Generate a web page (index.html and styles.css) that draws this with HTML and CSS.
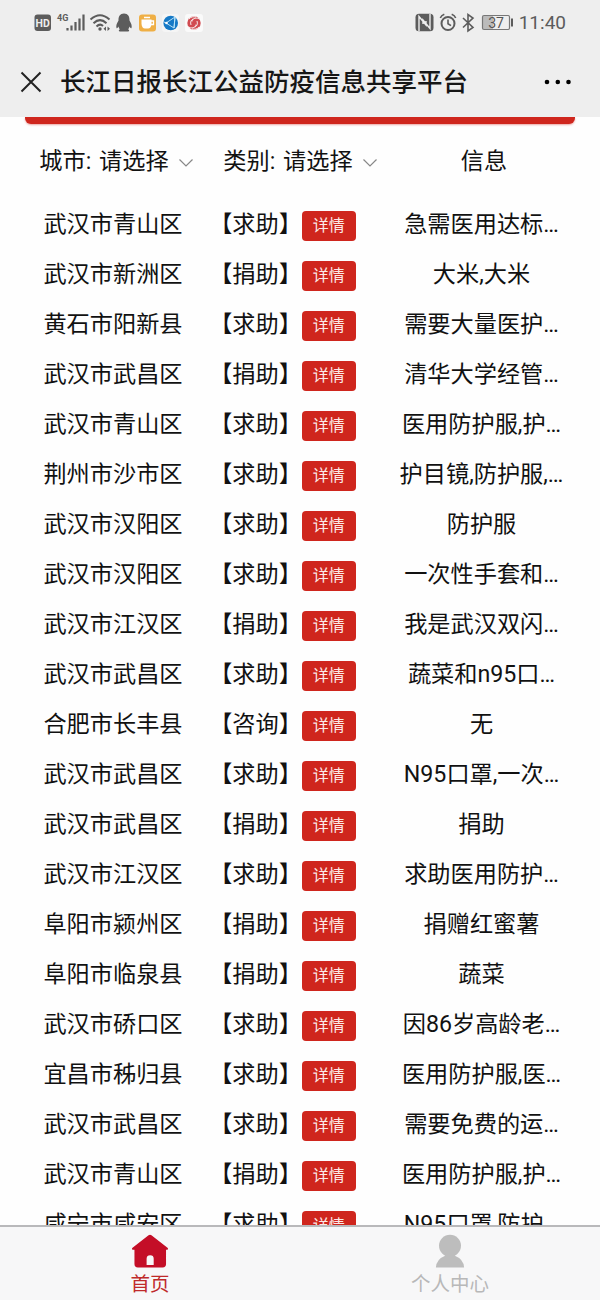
FILE: index.html
```html
<!DOCTYPE html>
<html lang="zh-CN">
<head>
    <meta charset="UTF-8">
    <meta name="viewport" content="width=device-width, initial-scale=1.0">
    <title>长江日报长江公益防疫信息共享平台</title>
    <link rel="stylesheet" href="styles.css">
</head>
<body>
    <!-- Phone status bar -->
    <div class="status-bar">
        <svg class="status-left" width="170" height="24" viewBox="34 11 170 24">
            <rect x="34.500" y="14.500" width="16.500" height="16.500" rx="3" fill="#5c5c5c"/>
            <text x="42.700" y="26.900" class="hd-text">HD</text>
            <text x="57" y="21.300" class="net-text">4G</text>
            <path d="M67.500 30.500v-2.500M71.500 30.500v-5M75.500 30.500v-8.500M79.500 30.500v-12M83.500 30.500v-16" stroke="#5c5c5c" stroke-width="2.200" fill="none"/>
            <path d="M90.500 19.500Q100 11 109.500 19.500M93.500 23.200Q100 17 106.500 23.200M96.500 26.500Q100 23 103 26" stroke="#5c5c5c" stroke-width="2" fill="none"/>
            <circle cx="100" cy="29" r="1.700" fill="#5c5c5c"/>
            <path d="M106 26.500v4.500l-2.500-2.200zM107.500 26.500v4.500l2.500-2.200z" fill="#5c5c5c"/>
            <path d="M124 13.500c-4 0-5.700 3-5.500 7-1.500 2.500-2.800 5-2 7.500.6.600 1.400-.5 2-1.500.2 1.300.6 2 1.500 2.800-1.500.5-1.700 2.200 0 2.200h8c1.700 0 1.500-1.700 0-2.200.9-.8 1.300-1.500 1.500-2.800.6 1 1.400 2.100 2 1.500.8-2.500-.5-5-2-7.500.2-4-1.500-7-5.500-7z" fill="#5c5c5c"/>
            <rect x="139" y="14.500" width="17" height="17" rx="3" fill="#efaf45"/>
            <path d="M141.500 19.500h10v4c0 3-1.500 5-3.500 5h-3c-2 0-3.500-2-3.500-5z" fill="#fff"/>
            <path d="M151 21h2.500v3.500H151M144 17.500h6" stroke="#fff" stroke-width="1.300" fill="none"/>
            <rect x="162" y="14" width="17" height="18" rx="3" fill="#f5f5f5"/>
            <circle cx="170.700" cy="23" r="7.300" fill="#1679c6"/>
            <path d="M175 17l-9 6 8 5zM175 17l-1 11M166 23l-2-1" stroke="#b9e2f7" stroke-width="1" fill="none"/>
            <circle cx="166.500" cy="23" r="1.300" fill="#fff"/>
            <rect x="185" y="14" width="18" height="18" rx="3" fill="#fafafa"/>
            <circle cx="194" cy="23" r="6.700" fill="#d14a50"/>
            <path d="M200.500 19.500c-4-2.500-8-1.500-8.500 2M187.500 26.500c4 2.500 8 1.500 8.500-2M189 19c2-2.500 5-2.500 7-2M199 27c-2 2.500-5 2.500-7 2M191 25c-1-3 0-5 2-6M197 21c1 3 0 5-2 6" stroke="#fafafa" stroke-width=".9" fill="none"/>
        </svg>
        <div class="status-right">
            <svg width="98" height="24" viewBox="415 11 98 24">
                <rect x="415.500" y="13.800" width="18" height="17.500" rx="3.500" fill="#5c5c5c"/>
                <path d="M419 31V16.500l7 8.500v-4M430 14v14.500l-7-8.500v4" stroke="#eee" stroke-width="1.400" fill="none"/>
                <circle cx="448" cy="23.500" r="6.500" stroke="#5c5c5c" stroke-width="2" fill="none"/>
                <path d="M448 19.500v4.200l3 2M440.300 18q1-2.500 4-3.700M455.700 18q-1-2.500-4-3.700" stroke="#5c5c5c" stroke-width="1.600" fill="none"/>
                <path d="M463 18l10 9.500-5 3.500V14.500l5 3.500-10 9.500" stroke="#5c5c5c" stroke-width="1.600" fill="none"/>
                <rect x="483" y="16" width="10" height="13" fill="#bbb"/>
                <rect x="482.500" y="15.500" width="27" height="14" rx="1.500" stroke="#777" stroke-width="1.200" fill="none"/>
                <path d="M512 18.500v8" stroke="#5c5c5c" stroke-width="2"/>
                <text x="496" y="27.500" class="battery-text">37</text>
            </svg>
            <span class="time">11:40</span>
        </div>
    </div>

    <!-- Title bar -->
    <div class="title-bar">
        <svg width="22" height="22" viewBox="0 0 22 22">
            <path d="M1.500 1.500l19 19M20.500 1.500l-19 19" stroke="#222" stroke-width="2"/>
        </svg>
        <h1>长江日报长江公益防疫信息共享平台</h1>
        <svg width="28" height="6" viewBox="0 0 28 6">
            <circle cx="3" cy="3" r="2.300"/>
            <circle cx="13.800" cy="3" r="2.300"/>
            <circle cx="24.500" cy="3" r="2.300"/>
        </svg>
    </div>

    <div class="content">
        <div class="banner"></div>

        <!-- Filters -->
        <div class="filters">
            <div>城市: 请选择<svg class="arrow" width="14" height="8" viewBox="0 0 14 8"><path d="M.5.500L7 7 13.500.500"/></svg></div>
            <div>类别: 请选择<svg class="arrow" width="14" height="8" viewBox="0 0 14 8"><path d="M.5.500L7 7 13.500.500"/></svg></div>
            <div>信息</div>
        </div>

        <div class="list">
            <div class="row"><span>武汉市青山区</span><span class="type">【求助】<button>详情</button></span><span>急需医用达标…</span></div>
            <div class="row"><span>武汉市新洲区</span><span class="type">【捐助】<button>详情</button></span><span>大米,大米</span></div>
            <div class="row"><span>黄石市阳新县</span><span class="type">【求助】<button>详情</button></span><span>需要大量医护…</span></div>
            <div class="row"><span>武汉市武昌区</span><span class="type">【捐助】<button>详情</button></span><span>清华大学经管…</span></div>
            <div class="row"><span>武汉市青山区</span><span class="type">【求助】<button>详情</button></span><span>医用防护服,护…</span></div>
            <div class="row"><span>荆州市沙市区</span><span class="type">【求助】<button>详情</button></span><span>护目镜,防护服,…</span></div>
            <div class="row"><span>武汉市汉阳区</span><span class="type">【求助】<button>详情</button></span><span>防护服</span></div>
            <div class="row"><span>武汉市汉阳区</span><span class="type">【求助】<button>详情</button></span><span>一次性手套和…</span></div>
            <div class="row"><span>武汉市江汉区</span><span class="type">【捐助】<button>详情</button></span><span>我是武汉双闪…</span></div>
            <div class="row"><span>武汉市武昌区</span><span class="type">【求助】<button>详情</button></span><span>蔬菜和n95口…</span></div>
            <div class="row"><span>合肥市长丰县</span><span class="type">【咨询】<button>详情</button></span><span>无</span></div>
            <div class="row"><span>武汉市武昌区</span><span class="type">【求助】<button>详情</button></span><span>N95口罩,一次…</span></div>
            <div class="row"><span>武汉市武昌区</span><span class="type">【捐助】<button>详情</button></span><span>捐助</span></div>
            <div class="row"><span>武汉市江汉区</span><span class="type">【求助】<button>详情</button></span><span>求助医用防护…</span></div>
            <div class="row"><span>阜阳市颍州区</span><span class="type">【捐助】<button>详情</button></span><span>捐赠红蜜薯</span></div>
            <div class="row"><span>阜阳市临泉县</span><span class="type">【捐助】<button>详情</button></span><span>蔬菜</span></div>
            <div class="row"><span>武汉市硚口区</span><span class="type">【求助】<button>详情</button></span><span>因86岁高龄老…</span></div>
            <div class="row"><span>宜昌市秭归县</span><span class="type">【求助】<button>详情</button></span><span>医用防护服,医…</span></div>
            <div class="row"><span>武汉市武昌区</span><span class="type">【求助】<button>详情</button></span><span>需要免费的运…</span></div>
            <div class="row"><span>武汉市青山区</span><span class="type">【捐助】<button>详情</button></span><span>医用防护服,护…</span></div>
            <div class="row"><span>咸宁市咸安区</span><span class="type">【求助】<button>详情</button></span><span>N95口罩,防护…</span></div>
        </div>
    </div>

    <!-- Bottom tabs -->
    <div class="tab-bar">
        <div class="tab active">
            <svg width="38" height="35" viewBox="0 0 38 35">
                <path d="M17.500 1.300Q19 .2 20.500 1.300L37 14.200Q38.500 16 36.500 16.300H35.500V31Q35.500 34.500 32 34.500H6.500Q3 34.500 3 31V16.300H1.500Q-.5 16 1 14.200zM15.500 32H22.800V25.500Q22.800 22 19.200 22T15.500 25.500z" fill="#c40e27" fill-rule="evenodd"/>
            </svg>
            <span>首页</span>
        </div>
        <div class="tab">
            <svg width="38" height="35" viewBox="0 0 38 35">
                <circle cx="19" cy="12" r="11.300" fill="#bdbdbd"/>
                <path d="M4.500 34.500Q5 26 14 22.500V20H24V22.500Q33 26 33.500 34.500z" fill="#bdbdbd"/>
            </svg>
            <span>个人中心</span>
        </div>
    </div>
</body>
</html>
```
FILE: styles.css
```css
* {
    box-sizing: border-box;
}
body {
    font-family: Roboto, "Noto Sans CJK SC", sans-serif;
    margin: 0;
    height: 1300px;
    display: flex;
    flex-direction: column;
    overflow: hidden;
    background-color: #fefefe;
    color: #111;
}
.status-bar {
    height: 46px;
    flex: none;
    padding: 0 34px;
    display: flex;
    align-items: center;
    justify-content: space-between;
    background-color: #eeeeee;
}
.status-right {
    display: flex;
    align-items: center;
    gap: 6px;
}
.hd-text {
    font-size: 10.5px;
    font-weight: bold;
    fill: #eee;
    text-anchor: middle;
}
.net-text {
    font-size: 9px;
    font-weight: bold;
    fill: #5c5c5c;
}
.battery-text {
    font-size: 14px;
    fill: #555;
    text-anchor: middle;
}
.time {
    font-size: 19px;
    line-height: 24px;
    color: #5c5c5c;
}
.title-bar {
    height: 71px;
    flex: none;
    padding: 0 28px 0 20px;
    display: flex;
    align-items: center;
    background-color: #eeeeee;
}
.title-bar h1 {
    flex: 1;
    margin: 0 0 0 18px;
    font-size: 25.5px;
    font-weight: 500;
    line-height: 36px;
    color: #161616;
}
.content {
    flex: 1;
    min-height: 0;
    overflow: hidden;
}
.banner {
    height: 7px;
    margin: 0 25px;
    background-color: #cf261d;
    border-radius: 0 0 6px 6px;
    box-shadow: 0 1px 2px rgba(207, 38, 29, 0.4);
}
.filters {
    height: 75px;
    padding: 0 24px 2px;
    display: grid;
    grid-template-columns: repeat(3, 1fr);
    align-items: center;
    text-align: center;
    font-size: 23.2px;
    line-height: 34px;
    word-spacing: 2px;
}
.arrow {
    margin-left: 10px;
    vertical-align: 2px;
    fill: none;
    stroke: #888;
    stroke-width: 1.2;
}
.row {
    height: 50px;
    padding-left: 24px;
    display: grid;
    grid-template-columns: 178px 161px 1fr;
    align-items: center;
    text-align: center;
    font-size: 23.2px;
    line-height: 34px;
    white-space: nowrap;
}
.type {
    display: flex;
    align-items: center;
    justify-content: center;
}
button {
    width: 54px;
    height: 30px;
    margin: 3px 0 0 0;
    padding: 0;
    border: none;
    border-radius: 4px;
    background-color: #cf261d;
    color: #fbe9e7;
    font-family: inherit;
    font-size: 16px;
    line-height: 28px;
}
.tab-bar {
    height: 75px;
    flex: none;
    display: flex;
    background-color: #f7f7f8;
    border-top: 2px solid #b9b9bb;
}
.tab {
    flex: 1;
    padding-top: 7px;
    display: flex;
    flex-direction: column;
    align-items: center;
    gap: 2px;
    color: #b8b8b8;
    font-size: 19.5px;
    line-height: 30px;
}
.active {
    color: #bf2a2a;
}
```
